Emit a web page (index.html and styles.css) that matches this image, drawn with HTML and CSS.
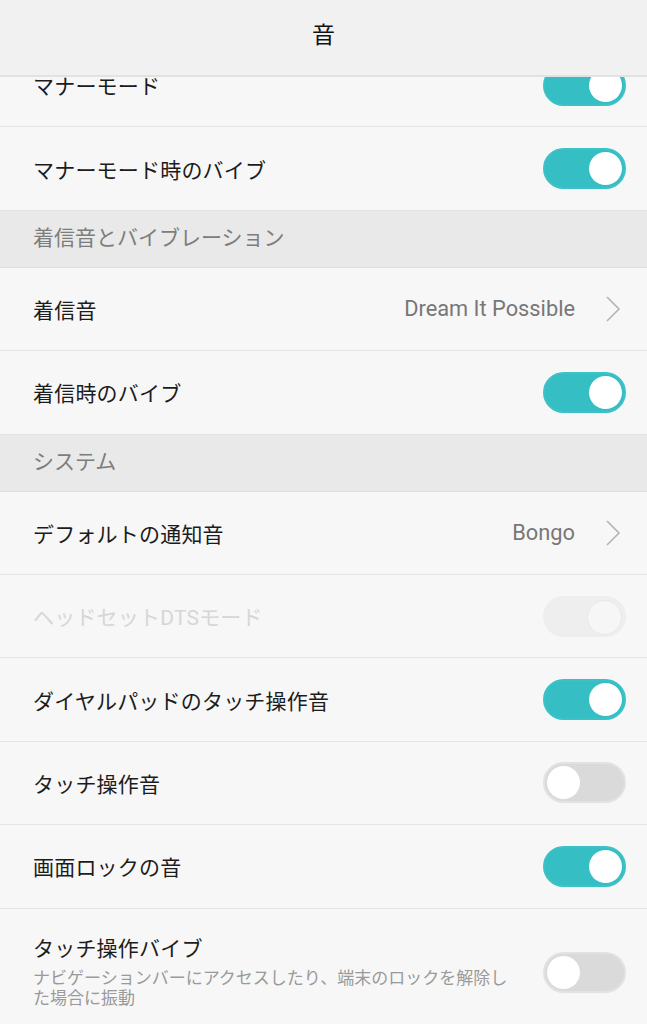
FILE: index.html
```html
<!DOCTYPE html>
<html lang="ja">
<head>
    <meta charset="UTF-8">
    <title>音</title>
    <link rel="stylesheet" href="styles.css">
</head>
<body>
<div id="screen">
    <div id="title-bar">音</div>
    <div id="list-box">
        <ul id="list">
            <li class="row">
                <span class="label">マナーモード</span>
                <span class="switch on"></span>
            </li>
            <li class="row">
                <span class="label">マナーモード時のバイブ</span>
                <span class="switch on"></span>
            </li>
            <li class="section">着信音とバイブレーション</li>
            <li class="row">
                <span class="label">着信音</span>
                <span class="value">Dream It Possible</span>
                <svg class="arrow" width="16" height="28" viewBox="0 0 16 28"><path d="M2 2 L14 14 L2 26" fill="none" stroke="#b4b4b4" stroke-width="1.6"/></svg>
            </li>
            <li class="row">
                <span class="label">着信時のバイブ</span>
                <span class="switch on"></span>
            </li>
            <li class="section">システム</li>
            <li class="row">
                <span class="label">デフォルトの通知音</span>
                <span class="value">Bongo</span>
                <svg class="arrow" width="16" height="28" viewBox="0 0 16 28"><path d="M2 2 L14 14 L2 26" fill="none" stroke="#b4b4b4" stroke-width="1.6"/></svg>
            </li>
            <li class="row disabled">
                <span class="label">ヘッドセットDTSモード</span>
                <span class="switch on"></span>
            </li>
            <li class="row">
                <span class="label">ダイヤルパッドのタッチ操作音</span>
                <span class="switch on"></span>
            </li>
            <li class="row">
                <span class="label">タッチ操作音</span>
                <span class="switch"></span>
            </li>
            <li class="row">
                <span class="label">画面ロックの音</span>
                <span class="switch on"></span>
            </li>
            <li class="row tall">
                <div class="text">
                    <span class="label">タッチ操作バイブ</span>
                    <span class="sub">ナビゲーションバーにアクセスしたり、端末のロックを解除した場合に振動</span>
                </div>
                <span class="switch"></span>
            </li>
        </ul>
    </div>
</div>
</body>
</html>
```

FILE: styles.css
```css
*{
    padding: 0;
    margin: 0;
    box-sizing: border-box;
}
ul{
    list-style: none;
}
body{
    background: #f7f7f7;
    font-family: Roboto, "Noto Sans CJK JP", sans-serif;
    color: #1c1c1c;
}
#screen{
    width: 647px;
    height: 1024px;
    overflow: hidden;
    display: flex;
    flex-direction: column;
}
#title-bar{
    height: 77px;
    flex-shrink: 0;
    background: #f1f1f1;
    border-bottom: 2px solid #e2e2e2;
    text-align: center;
    line-height: 72px;
    font-size: 23px;
    color: #111111;
}
#list-box{
    flex: 1;
    overflow: hidden;
}
#list{
    margin-top: -33px;
}
.row{
    height: 83.4px;
    padding: 0 21px 0 33px;
    display: flex;
    align-items: center;
    border-bottom: 1.5px solid #e4e4e4;
    background: #f7f7f7;
}
.row .label{
    flex: 1;
    font-size: 21px;
    letter-spacing: 0.2px;
}
.section{
    height: 57px;
    padding-left: 33px;
    line-height: 55px;
    font-size: 21px;
    color: #7d7d7d;
    background: #e9e9e9;
    border-bottom: 1.5px solid #dedede;
}
.value{
    font-size: 21.8px;
    color: #777777;
    margin-right: 30px;
}
.arrow{
    margin-right: 5px;
}
.switch{
    width: 83px;
    height: 41px;
    border-radius: 21px;
    background: #dadada;
    border: 2px solid #e2e2e2;
    position: relative;
    flex-shrink: 0;
}
.switch::after{
    content: "";
    position: absolute;
    top: 2px;
    left: 2px;
    width: 33px;
    height: 33px;
    border-radius: 50%;
    background: #ffffff;
}
.switch.on{
    background: #35bfc4;
    border-color: #3ac2c6;
}
.switch.on::after{
    left: auto;
    right: 2px;
}
.disabled .label{
    color: #d6d6d6;
}
.disabled .switch{
    background: #eeeeee;
    border-color: #eeeeee;
}
.disabled .switch::after{
    background: #f6f6f6;
    border: 1px solid #e8e8e8;
}
.row.tall{
    height: 130px;
    align-items: flex-start;
    padding-top: 23px;
    border-bottom: none;
}
.row.tall .switch{
    margin-top: 20px;
}
.text{
    flex: 1;
    display: flex;
    flex-direction: column;
    padding-right: 20px;
}
.sub{
    max-width: 484px;
    font-size: 17px;
    line-height: 20px;
    color: #9a9a9a;
    margin-top: 6px;
}
```
